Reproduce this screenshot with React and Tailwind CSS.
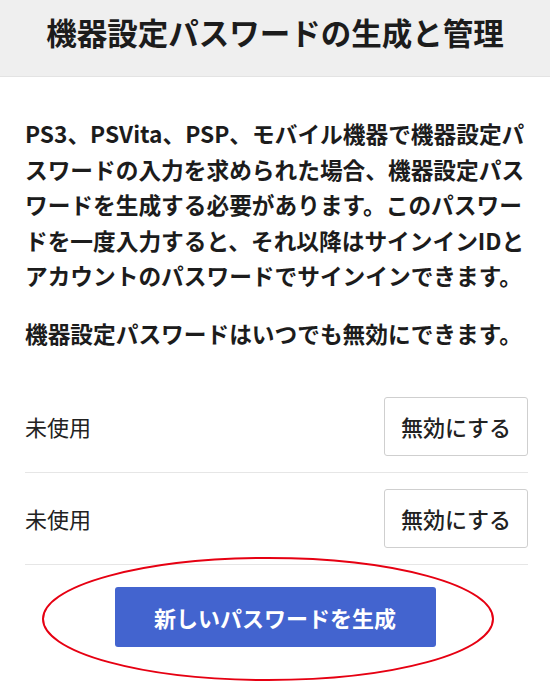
import React from 'react';

const lines = [
  'PS3、PSVita、PSP、モバイル機器で機器設定パ',
  'スワードの入力を求められた場合、機器設定パス',
  'ワードを生成する必要があります。このパスワー',
  'ドを一度入力すると、それ以降はサインインIDと',
  'アカウントのパスワードでサインインできます。',
];

function PasswordRow() {
  return (
    <div className="flex items-center justify-between py-4 border-b border-[#e6e6e6]">
      <span className="text-[22px] text-[#222]">未使用</span>
      <button className="h-[59px] w-[144px] rounded-[3px] border border-[#cfcfcf] bg-white text-[22px] font-medium text-[#222]">
        無効にする
      </button>
    </div>
  );
}

export default function App() {
  return (
    <div
      className="relative w-[550px] h-[693px] overflow-hidden bg-white"
      style={{ fontFamily: '"Noto Sans CJK JP", "Noto Sans", sans-serif' }}
    >
      <header className="h-[77px] flex items-center justify-center bg-[#efefef] border-b border-[#e3e3e3]">
        <h1 className="text-[30.5px] font-bold text-[#1c1c1c] leading-none pb-[12px]">
          機器設定パスワードの生成と管理
        </h1>
      </header>

      <div className="pl-[25px] pr-[22px]">
        <p className="mt-[39px] text-[22.7px] leading-[35.5px] font-bold text-[#1c1c1c] whitespace-nowrap">
          {lines.map((l, i) => (
            <span key={i} className="block">{l}</span>
          ))}
        </p>
        <p className="mt-[22px] text-[22.7px] leading-[35.5px] font-bold text-[#1c1c1c] whitespace-nowrap">
          機器設定パスワードはいつでも無効にできます。
        </p>

        <div className="mt-[30px]">
          <PasswordRow />
          <PasswordRow />
        </div>

        <div className="flex justify-center pt-[22px] pr-[3px]">
          <button className="h-[60px] w-[321px] rounded-[3px] bg-[#4364cf] text-white text-[22px] font-bold">
            新しいパスワードを生成
          </button>
        </div>
      </div>

      <svg className="absolute inset-0 pointer-events-none" width="550" height="693">
        <ellipse cx="268" cy="619" rx="225" ry="61" fill="none" stroke="#e60012" strokeWidth="2" />
      </svg>
    </div>
  );
}
